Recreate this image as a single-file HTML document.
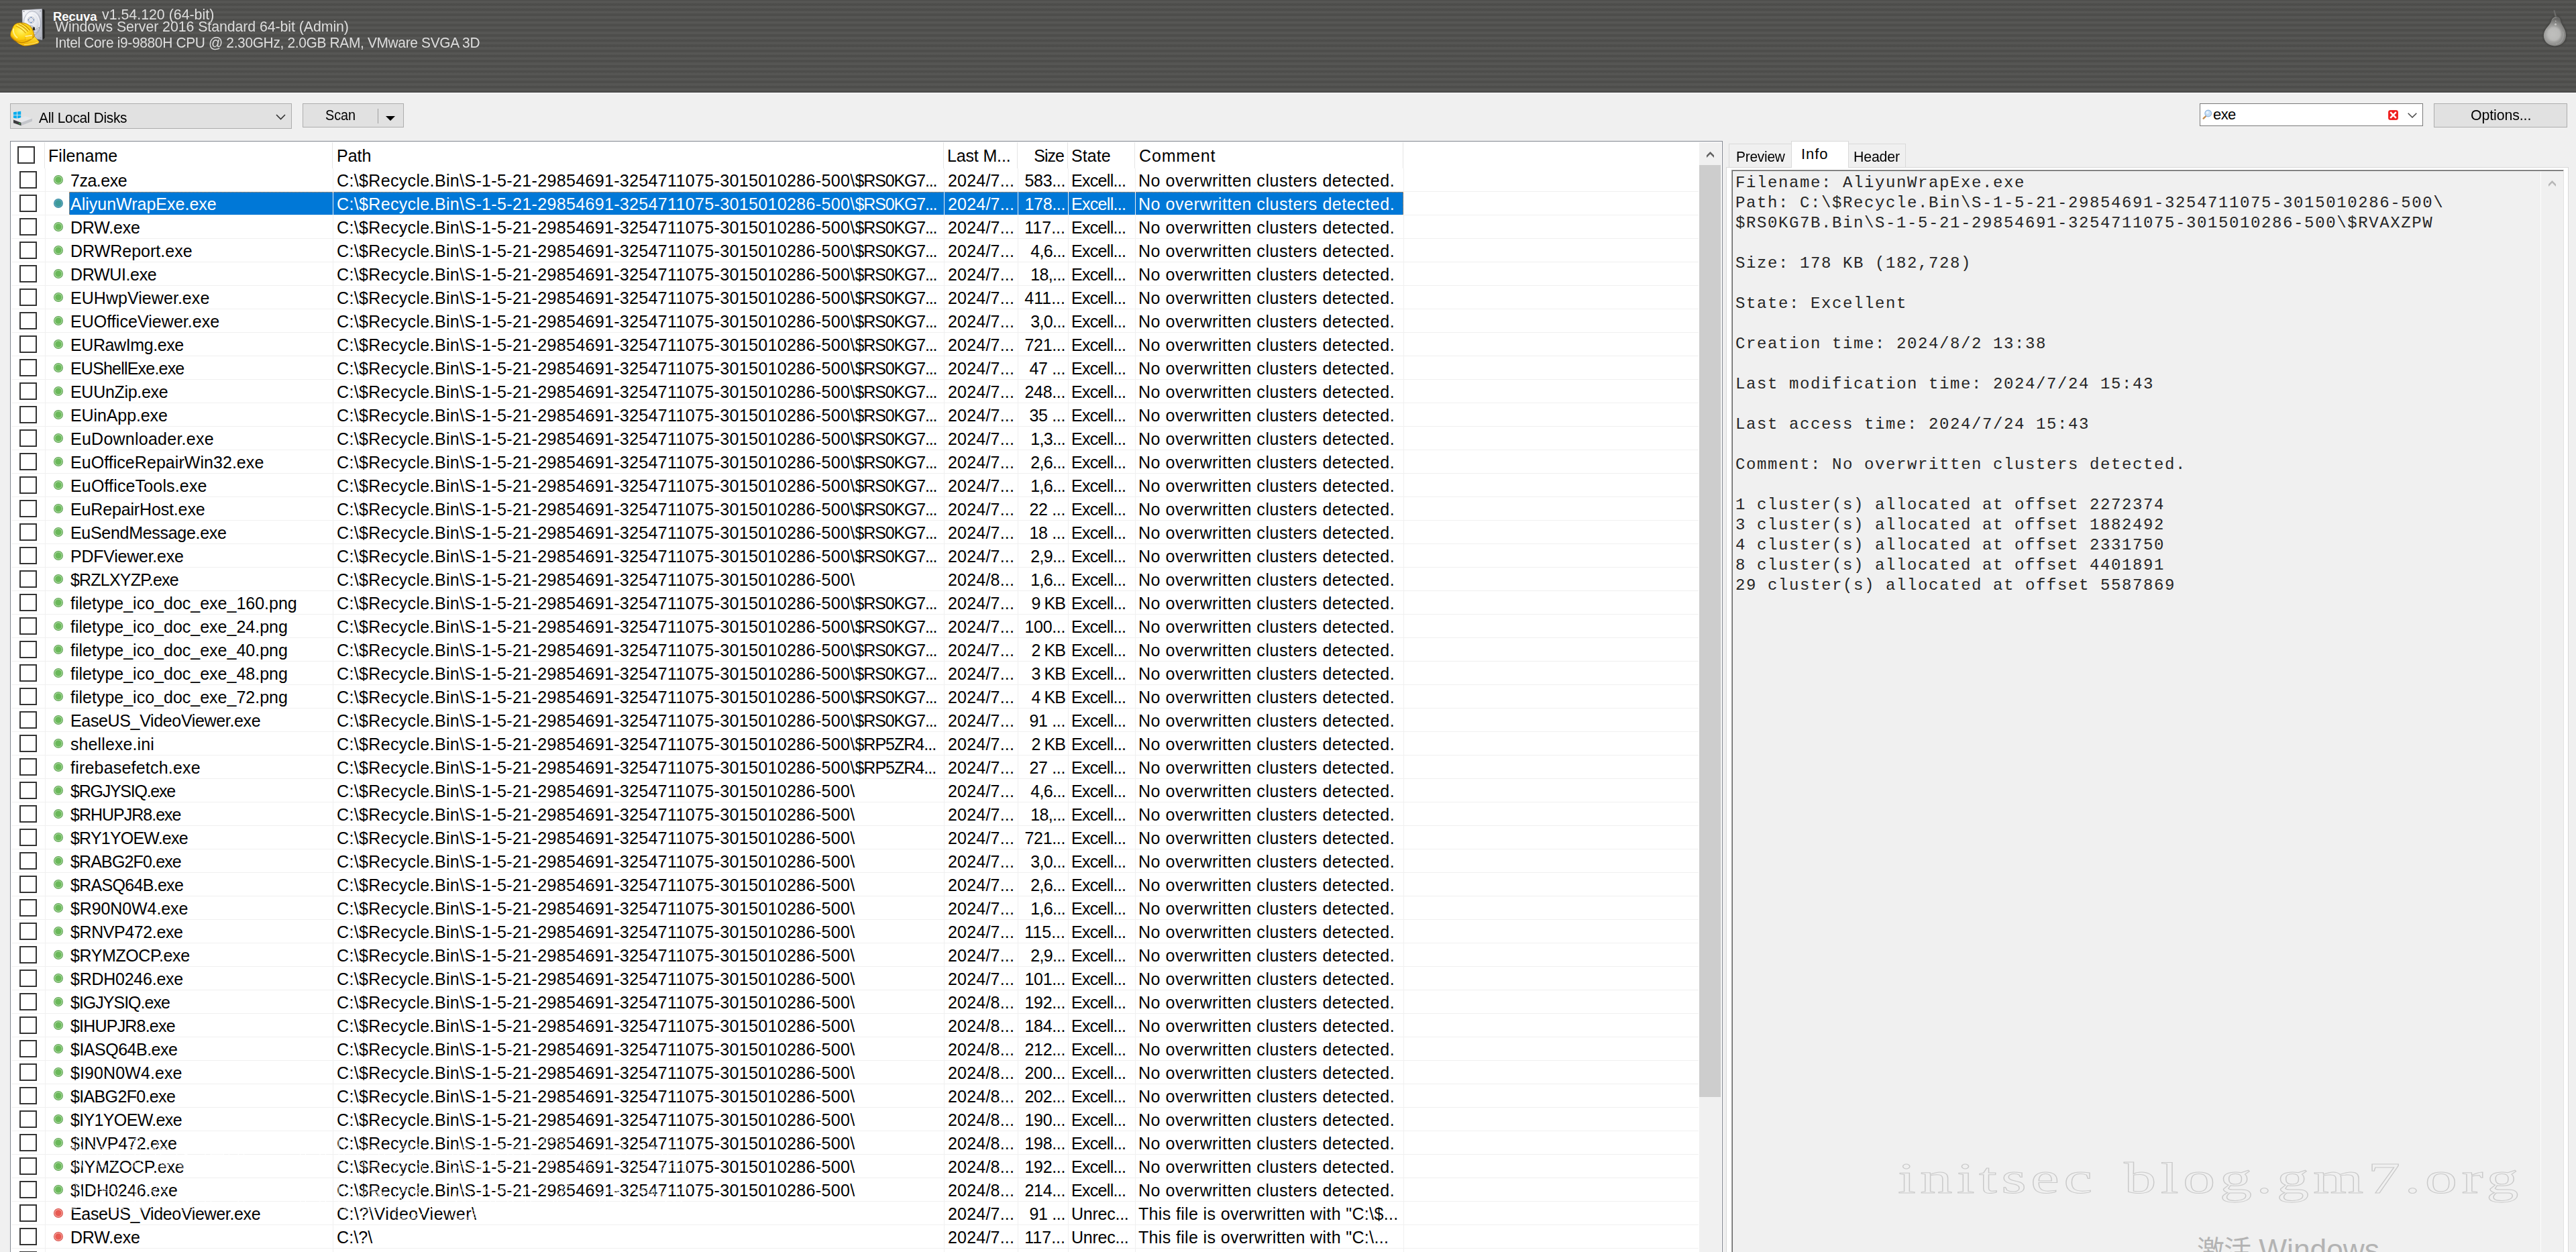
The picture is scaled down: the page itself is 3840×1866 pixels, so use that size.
<!DOCTYPE html>
<html lang="en"><head><meta charset="utf-8"><title>Recuva</title>
<style>
html,body{margin:0;padding:0}
body{width:3840px;height:1866px;overflow:hidden;position:relative;background:#f0f0f0;font-family:"Liberation Sans",sans-serif;color:#000}
div,span,i,b,pre{position:absolute;box-sizing:border-box;margin:0;padding:0;white-space:pre;font-style:normal}
svg{position:absolute;overflow:visible}
#hdr{left:0;top:0;width:3840px;height:137px;background:repeating-linear-gradient(to bottom,#4d4d4b 0px,#4d4d4b .6px,#565654 1.4px,#565654 4.4px,#4d4d4b 5.2px,#4d4d4b 7.68px)}
#hdrb{left:0;top:137px;width:3840px;height:1px;background:#464646}
#hdrw{left:0;top:138px;width:3840px;height:1px;background:#fbfbfb}
.ht{color:#dedede;font-size:22px;line-height:22px;letter-spacing:-0.6px}
#t_rec{left:79px;top:15px;height:20px;width:80px}
#t_rec b{left:0;top:0;font-weight:bold;font-size:18.6px;line-height:19px;color:#fff;letter-spacing:-.1px}
#t_ver{left:152px;top:11px;letter-spacing:0px;transform-origin:0 0;transform:scaleX(.97)}
#t_os{left:82px;top:33px;width:700px;height:24px}
#t_os span{left:0;top:-4px;letter-spacing:-0.08px;transform-origin:0 0;transform:scaleX(.97)}
#t_cpu{left:82px;top:53px;letter-spacing:-0.35px;transform-origin:0 0;transform:scaleX(.95)}
.btn{background:#e1e1e1;border:1px solid #adadad}
.tt{font-size:22px;line-height:22px;letter-spacing:-0.6px}
#combo{left:15px;top:154px;width:420px;height:38px}
#scan{left:451px;top:154px;width:151px;height:36px}
#opts{left:3628px;top:154px;width:199px;height:36px}
#search{left:3279px;top:154px;width:333px;height:34px;background:#fff;border:1px solid #7a7a7a}
#list{left:15px;top:210px;width:2553px;height:1670px;background:#fff;border:1px solid #828790}
#listin{left:0;top:0;width:2551px;height:1655px;overflow:hidden}
.row{left:0;width:2548px;height:35px}
.row::after{content:"";position:absolute;left:17px;top:34px;width:2515px;height:1px;background:#f0f0f0}
.cb{left:29px;top:4px;width:26px;height:26px;border:2px solid #333;background:#fff}
.dot{left:80px;top:10px;width:14px;height:14px;border-radius:50%}
.dg{background:radial-gradient(circle at 50% 50%,#6ab85a 0,#6ab85a 4.2px,#b4e0a8 5.3px,#5aa04e 6.4px,#5aa04e 7px)}
.ds{background:radial-gradient(circle at 50% 50%,#3d9a98 0,#3d9a98 4.2px,#62a8c2 5.3px,#3b8fa2 6.4px,#3b8fa2 7px)}
.dr{background:radial-gradient(circle at 50% 50%,#e85a52 0,#e85a52 4.2px,#f6b0a8 5.3px,#d84a44 6.4px,#d84a44 7px)}
.c{top:6px;font-size:25px;line-height:25px;height:30px}
.fn{left:105px}
.pa{left:502px}
.da{left:1413px}
.sz{right:960px;text-align:right}
.st{left:1597px}
.co{left:1697px}
.sel .c{color:#fff}
.hl{left:103px;top:0;width:1989px;height:34px;background:#0078d7;border:1px dotted #e98b35;border-bottom:none}
.vl{top:40px;width:1px;height:1640px;background:#f0f0f0}
.hvl{top:1px;width:1px;height:39px;background:#e5e5e5}
.hc{top:9px;font-size:25px;line-height:25px}
#sb{left:2517px;top:1px;width:33px;height:1660px;background:#f0f0f0}
#sbt{left:0;top:34px;width:32px;height:1389px;background:#cdcdcd}
.tab{background:#f0f0f0;border:1px solid #d9d9d9;border-bottom:none}
#pane{left:2573px;top:249px;width:1256px;height:1640px;background:#fff;border:1px solid #d9d9d9}
#tbox{left:2581px;top:253px;width:1241px;height:1640px;background:#f0f0f0;border:1px solid #a0a0a0;border-right-color:#e3e3e3}
#tbox2{left:0;top:0;width:1239px;height:1640px;border:1px solid #696969;border-right:none}
#info{left:2587px;top:258px;font-family:"Liberation Mono",monospace;font-size:24px;line-height:30px;color:#262626;letter-spacing:1.6px}
#wm{left:2829px;top:1723px;font-family:"Liberation Serif",serif;font-size:66px;line-height:66px;letter-spacing:4.4px;color:transparent;-webkit-text-stroke:1px #c9c9c9;transform-origin:0 0;word-spacing:7px;transform:scaleX(1.46)}
.wm2{left:104px;font-family:"Liberation Serif",serif;font-size:66px;line-height:66px;letter-spacing:4.4px;word-spacing:7px;color:transparent;-webkit-text-stroke:.7px #fff;transform-origin:0 0;transform:scaleX(1.46)}
#act{left:3275px;top:1841px;font-family:"Liberation Sans","Noto Sans CJK SC",sans-serif;font-size:44.3px;line-height:44.3px;color:#b3b3b3;letter-spacing:0px}
em{font-style:normal;position:static}
#act em{font-size:41px;letter-spacing:-1px}

.l0{letter-spacing:-0.5px}
.l1{letter-spacing:0.35px}
.l2{letter-spacing:-1.15px}
.l3{letter-spacing:0.2px}
.l4{letter-spacing:-0.35px}
.l5{letter-spacing:-0.7px}
.l6{letter-spacing:0.55px}
.l7{letter-spacing:0px}
.l8{letter-spacing:-0.2px}
.l9{letter-spacing:-0.65px}
.l10{letter-spacing:0.05px}
.l11{letter-spacing:-0.4px}
.l12{letter-spacing:-0.8px}
.l13{letter-spacing:-0.3px}
.l14{letter-spacing:-0.1px}
.l15{letter-spacing:0.25px}
.l16{letter-spacing:0.15px}
.l17{letter-spacing:-0.15px}
.l18{letter-spacing:-0.25px}
.l19{letter-spacing:-0.95px}
.l20{letter-spacing:0.1px}
.l21{letter-spacing:-1px}
.l22{letter-spacing:-1.25px}
.l23{letter-spacing:-0.85px}
.l24{letter-spacing:0.85px}
</style></head>
<body>
<div id="hdr"></div><div id="hdrb"></div><div id="hdrw"></div>
<svg style="left:0;top:0" width="90" height="80" viewBox="0 0 90 80">
<defs>
<linearGradient id="gF" x1="0" y1="0" x2="1" y2="1"><stop offset="0" stop-color="#fbfbfd"/><stop offset=".5" stop-color="#d6d9e2"/><stop offset="1" stop-color="#a9adb9"/></linearGradient>
<linearGradient id="gS" x1="0" y1="0" x2="1" y2="0"><stop offset="0" stop-color="#5a5a5a"/><stop offset=".5" stop-color="#161616"/><stop offset="1" stop-color="#3c3c3c"/></linearGradient>
<radialGradient id="gP" cx=".35" cy=".3" r=".8"><stop offset="0" stop-color="#ffffff"/><stop offset=".6" stop-color="#dfe2ea"/><stop offset="1" stop-color="#aeb2c0"/></radialGradient>
<radialGradient id="gH" cx=".38" cy=".35" r=".75"><stop offset="0" stop-color="#fff36a"/><stop offset=".35" stop-color="#ffd91a"/><stop offset=".75" stop-color="#f2b400"/><stop offset="1" stop-color="#c98a00"/></radialGradient>
<linearGradient id="gB" x1="0" y1="0" x2="0" y2="1"><stop offset="0" stop-color="#ffe23a"/><stop offset="1" stop-color="#f0b000"/></linearGradient>
</defs>
<path d="M62.5 13.3 L67 15 L67 56.6 L63 59.6 Z" fill="url(#gS)"/>
<path d="M33 15 L62.5 13.3 L63 59.6 L33.8 54.5 Z" fill="url(#gF)" stroke="#8d909c" stroke-width=".6"/>
<ellipse cx="48" cy="34.8" rx="12.9" ry="18.3" fill="url(#gP)" stroke="#9a9eac" stroke-width=".7"/>
<ellipse cx="48" cy="34.8" rx="10.5" ry="15.4" fill="none" stroke="#f6f7fa" stroke-width="1.2"/>
<circle cx="46.3" cy="29.8" r="4.9" fill="#eceef4" stroke="#9ea2b0" stroke-width=".7"/>
<circle cx="46.3" cy="29.8" r="1.8" fill="#dfe2ea"/>
<g fill="#1d4d96"><circle cx="46.3" cy="26.3" r=".8"/><circle cx="49.8" cy="29.8" r=".8"/><circle cx="46.3" cy="33.4" r=".8"/><circle cx="42.8" cy="29.8" r=".8"/></g>
<g fill="#3a3a3a"><circle cx="43.8" cy="27.3" r=".5"/><circle cx="48.8" cy="27.3" r=".5"/><circle cx="48.8" cy="32.3" r=".5"/><circle cx="43.8" cy="32.3" r=".5"/></g>
<path d="M45 37.5 L49 39 L53 45 L55.5 42 L57 44 L55 48 L52 49 L48 44 Z" fill="#cfd2dc" stroke="#8a8e9a" stroke-width=".5"/>
<rect x="48.8" y="40.6" width="3.2" height="4.6" rx=".6" fill="#2b2b2b"/>
<circle cx="58" cy="41.5" r=".7" fill="#555"/>
<circle cx="35.6" cy="17" r=".9" fill="#8b8e98"/><circle cx="60.2" cy="16.3" r=".9" fill="#8b8e98"/><circle cx="60.6" cy="56.5" r=".8" fill="#8b8e98"/>
<path d="M15.8 53.8 C15.4 49.5 16.4 46.5 17.8 44.3 C18.8 41 20 38.5 22 36.5 C24.5 34.6 28 33.8 31.5 34 C35.5 34 39 34.8 41.5 36.5 C44.8 38.3 47 40.8 48.3 43.8 C50 47.5 51 51 51.3 54.4 L57.8 61.7 C58.2 63 57.6 64 56.6 64.5 C50 66.8 41 68.5 34.8 68.1 C30.5 66.5 27 64.5 24.2 61.7 C20.5 59.5 17.3 57 15.8 53.8 Z" fill="url(#gH)" stroke="#a86f00" stroke-width=".8"/>
<path d="M24.2 61.7 C28 63.6 32 64.3 36 63.3 C42 61.9 47.5 58.7 51.3 54.4 L57.8 61.7 C58.2 63 57.6 64 56.6 64.5 C50 66.8 41 68.5 34.8 68.1 C30.5 66.5 27 64.5 24.2 61.7 Z" fill="url(#gB)"/>
<path d="M17 55.5 C19.5 58.5 22 60.5 24.6 61.6 C28.3 63.4 32 64 36 63 C42 61.6 47.4 58.4 51 54.2" fill="none" stroke="#b87800" stroke-width="1.5" opacity=".75"/>
<path d="M16.6 52.5 C18.8 56.5 22.5 59.2 27 60.2 C34 61.4 43 58.5 50.2 51.5" fill="none" stroke="#e59f00" stroke-width="1.6" opacity=".6"/>
<path d="M37.4 53.6 L48 51.9 L48.6 57.7 L38 59.8 Z" fill="#ffd21a" stroke="#d79a00" stroke-width=".4"/><path d="M37.2 53.4 L48 51.7 L48.2 53.2 L37.5 55 Z" fill="#fff3b0"/>
<path d="M27.5 36.2 C33 38.5 38 42 41.8 47" fill="none" stroke="#c98c00" stroke-width="1.2"/>
<path d="M31.5 35 C36.5 37 41 40.5 44.6 45.2" fill="none" stroke="#c98c00" stroke-width="1.2"/>
<path d="M23.6 38.4 C29 40.8 34.5 44.5 38.4 49.3" fill="none" stroke="#d89c00" stroke-width="1.1"/>
<path d="M28.6 35.4 C34 37.6 39 41 42.9 46" fill="none" stroke="#fff08a" stroke-width=".9" opacity=".9"/>
<path d="M24.7 37.5 C30 39.8 35.5 43.5 39.4 48.2" fill="none" stroke="#fff08a" stroke-width=".9" opacity=".9"/>
<path d="M20 42.5 C19 47 21 53 26 56.5" fill="none" stroke="#fff9b8" stroke-width="2" opacity=".75"/>
<path d="M36 66.6 C43 66.4 50 65 56.4 63" fill="none" stroke="#fff2a0" stroke-width=".9" opacity=".8"/>
</svg>
<svg style="left:3780px;top:0" width="60" height="80" viewBox="3780 0 60 80">
<defs><radialGradient id="gPr" cx="3805.5" cy="51" r="23" gradientUnits="userSpaceOnUse"><stop offset="0" stop-color="#c4c4c2"/><stop offset=".4" stop-color="#adadab"/><stop offset=".8" stop-color="#838381"/><stop offset="1" stop-color="#676765"/></radialGradient>
<filter id="fb" x="-20%" y="-20%" width="140%" height="140%"><feGaussianBlur stdDeviation="1.1"/></filter></defs>
<path d="M3810.5 23.8 C3814.5 23.8 3817.3 26.5 3817.9 30.3 C3818.7 35 3821.4 38.3 3823.4 42.3 C3825.5 46.5 3826 49.5 3826 53 C3826 62.8 3818 69.4 3808.4 69.4 C3798.8 69.4 3790.8 62.8 3790.8 53 C3790.8 47.8 3793.2 43.6 3796.7 39.6 C3799.7 36 3801.6 33.8 3802.4 30.6 C3803.3 26.6 3806.5 23.8 3810.5 23.8 Z" fill="#3c3c3b" filter="url(#fb)" opacity=".95"/>
<path d="M3806.4 15.6 L3808.4 15 L3811 24.6 L3808.8 25.2 Z" fill="#6c6c6a"/>
<path d="M3810.5 24.6 C3814 24.6 3816.5 27 3817 30.5 C3817.8 35 3820.5 38.5 3822.5 42.5 C3824.5 46.5 3825 49.5 3825 53 C3825 62.3 3817.5 68.4 3808.4 68.4 C3799.3 68.4 3791.8 62.3 3791.8 53 C3791.8 48 3794 44 3797.5 40 C3800.5 36.5 3802.5 34 3803.3 30.8 C3804.2 27 3807 24.6 3810.5 24.6 Z" fill="url(#gPr)"/>
<ellipse cx="3807.5" cy="50.5" rx="10" ry="10.5" fill="#bebebc" filter="url(#fb)" opacity=".75"/>
<path d="M3820.5 47 C3822 52 3821.3 57 3818.6 61 C3816.5 63.8 3813.5 65.3 3810 65.6" fill="none" stroke="#a8a8a6" stroke-width="1.1" opacity=".8"/>
<path d="M3804.6 29.5 C3806 27.2 3808.5 26 3811 26.3" fill="none" stroke="#a0a09e" stroke-width=".9" opacity=".8"/>
<circle cx="3809.5" cy="36.3" r="1.5" fill="#c6c6c4"/><circle cx="3809.7" cy="31.5" r=".8" fill="#bcbcba"/>
</svg>
<div id="t_rec"><b>Recuva</b></div>
<span id="t_ver" class="ht">v1.54.120 (64-bit)</span>
<div id="t_os"><span class="ht">Windows Server 2016 Standard 64-bit (Admin)</span></div>
<span id="t_cpu" class="ht">Intel Core i9-9880H CPU @ 2.30GHz, 2.0GB RAM, VMware SVGA 3D</span>

<div id="combo" class="btn"><svg style="left:0;top:0" width="40" height="36" viewBox="16 155 40 36">
<g fill="#00adef"><path d="M20 167.3 L25 166.6 V171 H20 Z"/><path d="M26 166.5 L31.2 165.8 V171 H26 Z"/><path d="M20 172 H25 V176.4 L20 175.7 Z"/><path d="M26 172 H31.2 V177.2 L26 176.5 Z"/></g>
<path d="M20 178.6 L37.5 173.2 L48 176.4 L31.5 182.8 Z" fill="#e6e7ea"/>
<path d="M31.5 182.8 L48 176.4 V180.8 L31.5 187.2 Z" fill="#c3c5ca"/>
<path d="M20 178.6 L31.5 182.8 V187.2 L20 183.2 Z" fill="#3c3c3e"/>
<rect x="28.3" y="183.6" width="2" height="1.3" fill="#35d04a"/>
</svg><span class="tt" style="left:42px;top:10px;letter-spacing:-.33px;transform-origin:0 0;transform:scaleX(.95)">All Local Disks</span>
<svg style="left:395px;top:15px" width="15" height="9" viewBox="0 0 15 9"><path d="M1 1 L7.5 7.5 L14 1" fill="none" stroke="#333" stroke-width="1.6"/></svg></div>
<div id="scan" class="btn"><span class="tt" style="left:33px;top:6px;letter-spacing:0;transform-origin:0 0;transform:scaleX(.9)">Scan</span><i style="left:111px;top:7px;width:1px;height:22px;background:#a0a0a0"></i>
<svg style="left:123px;top:18px" width="14" height="7" viewBox="0 0 14 7"><path d="M0 0 H14 L7 7 Z" fill="#000"/></svg></div>
<div id="search"><svg style="left:0;top:0" width="24" height="32" viewBox="0 0 24 32">
<path d="M4.6 21.6 L8.4 18" stroke="#c58a4a" stroke-width="2.4" stroke-linecap="round"/>
<circle cx="11.7" cy="14" r="4.9" fill="#c4dcf4" stroke="#8fb4dc" stroke-width="1.1"/>
<circle cx="10.6" cy="12.8" r="2" fill="#e8f3fd"/>
</svg><span class="tt" style="left:19px;top:5px">exe</span>
<svg style="left:280px;top:9px" width="15" height="15" viewBox="0 0 15 15"><rect x=".5" y=".5" width="14" height="14" rx="2.5" fill="#ee1c1c" stroke="#f43030"/><path d="M3.2 3.2 L11.8 11.8 M11.8 3.2 L3.2 11.8" stroke="#fff" stroke-width="2.6"/></svg>
<svg style="left:309px;top:13px" width="14" height="8" viewBox="0 0 14 8"><path d="M.7 .7 L7 7 L13.3 .7" fill="none" stroke="#444" stroke-width="1.5"/></svg></div>
<div id="opts" class="btn"><span class="tt" style="left:54px;top:6px;letter-spacing:-0.11px;transform-origin:0 0;transform:scaleX(.97)">Options...</span></div>

<div id="list"><div id="listin">
<i class="cb" style="left:10px;top:7px"></i>
<i class="hvl" style="left:50px"></i><i class="hvl" style="left:479px"></i><i class="hvl" style="left:1390px"></i><i class="hvl" style="left:1500px"></i><i class="hvl" style="left:1575px"></i><i class="hvl" style="left:1675px"></i><i class="hvl" style="left:2075px"></i>
<span class="hc l10" style="left:56px">Filename</span><span class="hc l7" style="left:486px">Path</span><span class="hc l17" style="left:1396px">Last M...</span><span class="hc l21" style="right:981px">Size</span><span class="hc l10" style="left:1581px">State</span><span class="hc l24" style="left:1682px">Comment</span>
<div id="rows" style="left:-16px;top:-211px;width:2600px;height:1900px">
<div class="row" style="top:251px"><i class="cb"></i><i class="dot dg"></i><span class="c fn l0">7za.exe</span><span class="c pa l1">C:\$Recycle.Bin\S-1-5-21-29854691-3254711075-3015010286-500\<em class="l2">$RS0KG7...</em></span><span class="c da l3">2024/7...</span><span class="c sz l4">583...</span><span class="c st l5">Excell...</span><span class="c co l6">No overwritten clusters detected.</span></div>
<div class="row sel" style="top:286px"><div class="hl"></div><i class="cb"></i><i class="dot ds"></i><span class="c fn l7">AliyunWrapExe.exe</span><span class="c pa l1">C:\$Recycle.Bin\S-1-5-21-29854691-3254711075-3015010286-500\<em class="l2">$RS0KG7...</em></span><span class="c da l3">2024/7...</span><span class="c sz l4">178...</span><span class="c st l5">Excell...</span><span class="c co l6">No overwritten clusters detected.</span></div>
<div class="row" style="top:321px"><i class="cb"></i><i class="dot dg"></i><span class="c fn l8">DRW.exe</span><span class="c pa l1">C:\$Recycle.Bin\S-1-5-21-29854691-3254711075-3015010286-500\<em class="l2">$RS0KG7...</em></span><span class="c da l3">2024/7...</span><span class="c sz l7">117...</span><span class="c st l5">Excell...</span><span class="c co l6">No overwritten clusters detected.</span></div>
<div class="row" style="top:356px"><i class="cb"></i><i class="dot dg"></i><span class="c fn l7">DRWReport.exe</span><span class="c pa l1">C:\$Recycle.Bin\S-1-5-21-29854691-3254711075-3015010286-500\<em class="l2">$RS0KG7...</em></span><span class="c da l3">2024/7...</span><span class="c sz l9">4,6...</span><span class="c st l5">Excell...</span><span class="c co l6">No overwritten clusters detected.</span></div>
<div class="row" style="top:391px"><i class="cb"></i><i class="dot dg"></i><span class="c fn l4">DRWUI.exe</span><span class="c pa l1">C:\$Recycle.Bin\S-1-5-21-29854691-3254711075-3015010286-500\<em class="l2">$RS0KG7...</em></span><span class="c da l3">2024/7...</span><span class="c sz l9">18,...</span><span class="c st l5">Excell...</span><span class="c co l6">No overwritten clusters detected.</span></div>
<div class="row" style="top:426px"><i class="cb"></i><i class="dot dg"></i><span class="c fn l10">EUHwpViewer.exe</span><span class="c pa l1">C:\$Recycle.Bin\S-1-5-21-29854691-3254711075-3015010286-500\<em class="l2">$RS0KG7...</em></span><span class="c da l3">2024/7...</span><span class="c sz l7">411...</span><span class="c st l5">Excell...</span><span class="c co l6">No overwritten clusters detected.</span></div>
<div class="row" style="top:461px"><i class="cb"></i><i class="dot dg"></i><span class="c fn l10">EUOfficeViewer.exe</span><span class="c pa l1">C:\$Recycle.Bin\S-1-5-21-29854691-3254711075-3015010286-500\<em class="l2">$RS0KG7...</em></span><span class="c da l3">2024/7...</span><span class="c sz l9">3,0...</span><span class="c st l5">Excell...</span><span class="c co l6">No overwritten clusters detected.</span></div>
<div class="row" style="top:496px"><i class="cb"></i><i class="dot dg"></i><span class="c fn l11">EURawImg.exe</span><span class="c pa l1">C:\$Recycle.Bin\S-1-5-21-29854691-3254711075-3015010286-500\<em class="l2">$RS0KG7...</em></span><span class="c da l3">2024/7...</span><span class="c sz l4">721...</span><span class="c st l5">Excell...</span><span class="c co l6">No overwritten clusters detected.</span></div>
<div class="row" style="top:531px"><i class="cb"></i><i class="dot dg"></i><span class="c fn l12">EUShellExe.exe</span><span class="c pa l1">C:\$Recycle.Bin\S-1-5-21-29854691-3254711075-3015010286-500\<em class="l2">$RS0KG7...</em></span><span class="c da l3">2024/7...</span><span class="c sz l4">47 ...</span><span class="c st l5">Excell...</span><span class="c co l6">No overwritten clusters detected.</span></div>
<div class="row" style="top:566px"><i class="cb"></i><i class="dot dg"></i><span class="c fn l13">EUUnZip.exe</span><span class="c pa l1">C:\$Recycle.Bin\S-1-5-21-29854691-3254711075-3015010286-500\<em class="l2">$RS0KG7...</em></span><span class="c da l3">2024/7...</span><span class="c sz l4">248...</span><span class="c st l5">Excell...</span><span class="c co l6">No overwritten clusters detected.</span></div>
<div class="row" style="top:601px"><i class="cb"></i><i class="dot dg"></i><span class="c fn l14">EUinApp.exe</span><span class="c pa l1">C:\$Recycle.Bin\S-1-5-21-29854691-3254711075-3015010286-500\<em class="l2">$RS0KG7...</em></span><span class="c da l3">2024/7...</span><span class="c sz l4">35 ...</span><span class="c st l5">Excell...</span><span class="c co l6">No overwritten clusters detected.</span></div>
<div class="row" style="top:636px"><i class="cb"></i><i class="dot dg"></i><span class="c fn l15">EuDownloader.exe</span><span class="c pa l1">C:\$Recycle.Bin\S-1-5-21-29854691-3254711075-3015010286-500\<em class="l2">$RS0KG7...</em></span><span class="c da l3">2024/7...</span><span class="c sz l9">1,3...</span><span class="c st l5">Excell...</span><span class="c co l6">No overwritten clusters detected.</span></div>
<div class="row" style="top:671px"><i class="cb"></i><i class="dot dg"></i><span class="c fn l10">EuOfficeRepairWin32.exe</span><span class="c pa l1">C:\$Recycle.Bin\S-1-5-21-29854691-3254711075-3015010286-500\<em class="l2">$RS0KG7...</em></span><span class="c da l3">2024/7...</span><span class="c sz l9">2,6...</span><span class="c st l5">Excell...</span><span class="c co l6">No overwritten clusters detected.</span></div>
<div class="row" style="top:706px"><i class="cb"></i><i class="dot dg"></i><span class="c fn l16">EuOfficeTools.exe</span><span class="c pa l1">C:\$Recycle.Bin\S-1-5-21-29854691-3254711075-3015010286-500\<em class="l2">$RS0KG7...</em></span><span class="c da l3">2024/7...</span><span class="c sz l9">1,6...</span><span class="c st l5">Excell...</span><span class="c co l6">No overwritten clusters detected.</span></div>
<div class="row" style="top:741px"><i class="cb"></i><i class="dot dg"></i><span class="c fn l17">EuRepairHost.exe</span><span class="c pa l1">C:\$Recycle.Bin\S-1-5-21-29854691-3254711075-3015010286-500\<em class="l2">$RS0KG7...</em></span><span class="c da l3">2024/7...</span><span class="c sz l4">22 ...</span><span class="c st l5">Excell...</span><span class="c co l6">No overwritten clusters detected.</span></div>
<div class="row" style="top:776px"><i class="cb"></i><i class="dot dg"></i><span class="c fn l13">EuSendMessage.exe</span><span class="c pa l1">C:\$Recycle.Bin\S-1-5-21-29854691-3254711075-3015010286-500\<em class="l2">$RS0KG7...</em></span><span class="c da l3">2024/7...</span><span class="c sz l4">18 ...</span><span class="c st l5">Excell...</span><span class="c co l6">No overwritten clusters detected.</span></div>
<div class="row" style="top:811px"><i class="cb"></i><i class="dot dg"></i><span class="c fn l18">PDFViewer.exe</span><span class="c pa l1">C:\$Recycle.Bin\S-1-5-21-29854691-3254711075-3015010286-500\<em class="l2">$RS0KG7...</em></span><span class="c da l3">2024/7...</span><span class="c sz l9">2,9...</span><span class="c st l5">Excell...</span><span class="c co l6">No overwritten clusters detected.</span></div>
<div class="row" style="top:846px"><i class="cb"></i><i class="dot dg"></i><span class="c fn l12">$RZLXYZP.exe</span><span class="c pa l1">C:\$Recycle.Bin\S-1-5-21-29854691-3254711075-3015010286-500\</span><span class="c da l3">2024/8...</span><span class="c sz l9">1,6...</span><span class="c st l5">Excell...</span><span class="c co l6">No overwritten clusters detected.</span></div>
<div class="row" style="top:881px"><i class="cb"></i><i class="dot dg"></i><span class="c fn l7">filetype_ico_doc_exe_160.png</span><span class="c pa l1">C:\$Recycle.Bin\S-1-5-21-29854691-3254711075-3015010286-500\<em class="l2">$RS0KG7...</em></span><span class="c da l3">2024/7...</span><span class="c sz l19">9 KB</span><span class="c st l5">Excell...</span><span class="c co l6">No overwritten clusters detected.</span></div>
<div class="row" style="top:916px"><i class="cb"></i><i class="dot dg"></i><span class="c fn l7">filetype_ico_doc_exe_24.png</span><span class="c pa l1">C:\$Recycle.Bin\S-1-5-21-29854691-3254711075-3015010286-500\<em class="l2">$RS0KG7...</em></span><span class="c da l3">2024/7...</span><span class="c sz l4">100...</span><span class="c st l5">Excell...</span><span class="c co l6">No overwritten clusters detected.</span></div>
<div class="row" style="top:951px"><i class="cb"></i><i class="dot dg"></i><span class="c fn l7">filetype_ico_doc_exe_40.png</span><span class="c pa l1">C:\$Recycle.Bin\S-1-5-21-29854691-3254711075-3015010286-500\<em class="l2">$RS0KG7...</em></span><span class="c da l3">2024/7...</span><span class="c sz l19">2 KB</span><span class="c st l5">Excell...</span><span class="c co l6">No overwritten clusters detected.</span></div>
<div class="row" style="top:986px"><i class="cb"></i><i class="dot dg"></i><span class="c fn l7">filetype_ico_doc_exe_48.png</span><span class="c pa l1">C:\$Recycle.Bin\S-1-5-21-29854691-3254711075-3015010286-500\<em class="l2">$RS0KG7...</em></span><span class="c da l3">2024/7...</span><span class="c sz l19">3 KB</span><span class="c st l5">Excell...</span><span class="c co l6">No overwritten clusters detected.</span></div>
<div class="row" style="top:1021px"><i class="cb"></i><i class="dot dg"></i><span class="c fn l7">filetype_ico_doc_exe_72.png</span><span class="c pa l1">C:\$Recycle.Bin\S-1-5-21-29854691-3254711075-3015010286-500\<em class="l2">$RS0KG7...</em></span><span class="c da l3">2024/7...</span><span class="c sz l19">4 KB</span><span class="c st l5">Excell...</span><span class="c co l6">No overwritten clusters detected.</span></div>
<div class="row" style="top:1056px"><i class="cb"></i><i class="dot dg"></i><span class="c fn l4">EaseUS_VideoViewer.exe</span><span class="c pa l1">C:\$Recycle.Bin\S-1-5-21-29854691-3254711075-3015010286-500\<em class="l2">$RS0KG7...</em></span><span class="c da l3">2024/7...</span><span class="c sz l4">91 ...</span><span class="c st l5">Excell...</span><span class="c co l6">No overwritten clusters detected.</span></div>
<div class="row" style="top:1091px"><i class="cb"></i><i class="dot dg"></i><span class="c fn l20">shellexe.ini</span><span class="c pa l1">C:\$Recycle.Bin\S-1-5-21-29854691-3254711075-3015010286-500\<em class="l21">$RP5ZR4...</em></span><span class="c da l3">2024/7...</span><span class="c sz l19">2 KB</span><span class="c st l5">Excell...</span><span class="c co l6">No overwritten clusters detected.</span></div>
<div class="row" style="top:1126px"><i class="cb"></i><i class="dot dg"></i><span class="c fn l3">firebasefetch.exe</span><span class="c pa l1">C:\$Recycle.Bin\S-1-5-21-29854691-3254711075-3015010286-500\<em class="l21">$RP5ZR4...</em></span><span class="c da l3">2024/7...</span><span class="c sz l4">27 ...</span><span class="c st l5">Excell...</span><span class="c co l6">No overwritten clusters detected.</span></div>
<div class="row" style="top:1161px"><i class="cb"></i><i class="dot dg"></i><span class="c fn l22">$RGJYSIQ.exe</span><span class="c pa l1">C:\$Recycle.Bin\S-1-5-21-29854691-3254711075-3015010286-500\</span><span class="c da l3">2024/7...</span><span class="c sz l9">4,6...</span><span class="c st l5">Excell...</span><span class="c co l6">No overwritten clusters detected.</span></div>
<div class="row" style="top:1196px"><i class="cb"></i><i class="dot dg"></i><span class="c fn l21">$RHUPJR8.exe</span><span class="c pa l1">C:\$Recycle.Bin\S-1-5-21-29854691-3254711075-3015010286-500\</span><span class="c da l3">2024/7...</span><span class="c sz l9">18,...</span><span class="c st l5">Excell...</span><span class="c co l6">No overwritten clusters detected.</span></div>
<div class="row" style="top:1231px"><i class="cb"></i><i class="dot dg"></i><span class="c fn l12">$RY1YOEW.exe</span><span class="c pa l1">C:\$Recycle.Bin\S-1-5-21-29854691-3254711075-3015010286-500\</span><span class="c da l3">2024/7...</span><span class="c sz l4">721...</span><span class="c st l5">Excell...</span><span class="c co l6">No overwritten clusters detected.</span></div>
<div class="row" style="top:1266px"><i class="cb"></i><i class="dot dg"></i><span class="c fn l23">$RABG2F0.exe</span><span class="c pa l1">C:\$Recycle.Bin\S-1-5-21-29854691-3254711075-3015010286-500\</span><span class="c da l3">2024/7...</span><span class="c sz l9">3,0...</span><span class="c st l5">Excell...</span><span class="c co l6">No overwritten clusters detected.</span></div>
<div class="row" style="top:1301px"><i class="cb"></i><i class="dot dg"></i><span class="c fn l5">$RASQ64B.exe</span><span class="c pa l1">C:\$Recycle.Bin\S-1-5-21-29854691-3254711075-3015010286-500\</span><span class="c da l3">2024/7...</span><span class="c sz l9">2,6...</span><span class="c st l5">Excell...</span><span class="c co l6">No overwritten clusters detected.</span></div>
<div class="row" style="top:1336px"><i class="cb"></i><i class="dot dg"></i><span class="c fn l14">$R90N0W4.exe</span><span class="c pa l1">C:\$Recycle.Bin\S-1-5-21-29854691-3254711075-3015010286-500\</span><span class="c da l3">2024/7...</span><span class="c sz l9">1,6...</span><span class="c st l5">Excell...</span><span class="c co l6">No overwritten clusters detected.</span></div>
<div class="row" style="top:1371px"><i class="cb"></i><i class="dot dg"></i><span class="c fn l11">$RNVP472.exe</span><span class="c pa l1">C:\$Recycle.Bin\S-1-5-21-29854691-3254711075-3015010286-500\</span><span class="c da l3">2024/7...</span><span class="c sz l7">115...</span><span class="c st l5">Excell...</span><span class="c co l6">No overwritten clusters detected.</span></div>
<div class="row" style="top:1406px"><i class="cb"></i><i class="dot dg"></i><span class="c fn l11">$RYMZOCP.exe</span><span class="c pa l1">C:\$Recycle.Bin\S-1-5-21-29854691-3254711075-3015010286-500\</span><span class="c da l3">2024/7...</span><span class="c sz l9">2,9...</span><span class="c st l5">Excell...</span><span class="c co l6">No overwritten clusters detected.</span></div>
<div class="row" style="top:1441px"><i class="cb"></i><i class="dot dg"></i><span class="c fn l18">$RDH0246.exe</span><span class="c pa l1">C:\$Recycle.Bin\S-1-5-21-29854691-3254711075-3015010286-500\</span><span class="c da l3">2024/7...</span><span class="c sz l4">101...</span><span class="c st l5">Excell...</span><span class="c co l6">No overwritten clusters detected.</span></div>
<div class="row" style="top:1476px"><i class="cb"></i><i class="dot dg"></i><span class="c fn l21">$IGJYSIQ.exe</span><span class="c pa l1">C:\$Recycle.Bin\S-1-5-21-29854691-3254711075-3015010286-500\</span><span class="c da l3">2024/8...</span><span class="c sz l4">192...</span><span class="c st l5">Excell...</span><span class="c co l6">No overwritten clusters detected.</span></div>
<div class="row" style="top:1511px"><i class="cb"></i><i class="dot dg"></i><span class="c fn l12">$IHUPJR8.exe</span><span class="c pa l1">C:\$Recycle.Bin\S-1-5-21-29854691-3254711075-3015010286-500\</span><span class="c da l3">2024/8...</span><span class="c sz l4">184...</span><span class="c st l5">Excell...</span><span class="c co l6">No overwritten clusters detected.</span></div>
<div class="row" style="top:1546px"><i class="cb"></i><i class="dot dg"></i><span class="c fn l0">$IASQ64B.exe</span><span class="c pa l1">C:\$Recycle.Bin\S-1-5-21-29854691-3254711075-3015010286-500\</span><span class="c da l3">2024/8...</span><span class="c sz l4">212...</span><span class="c st l5">Excell...</span><span class="c co l6">No overwritten clusters detected.</span></div>
<div class="row" style="top:1581px"><i class="cb"></i><i class="dot dg"></i><span class="c fn l20">$I90N0W4.exe</span><span class="c pa l1">C:\$Recycle.Bin\S-1-5-21-29854691-3254711075-3015010286-500\</span><span class="c da l3">2024/8...</span><span class="c sz l4">200...</span><span class="c st l5">Excell...</span><span class="c co l6">No overwritten clusters detected.</span></div>
<div class="row" style="top:1616px"><i class="cb"></i><i class="dot dg"></i><span class="c fn l9">$IABG2F0.exe</span><span class="c pa l1">C:\$Recycle.Bin\S-1-5-21-29854691-3254711075-3015010286-500\</span><span class="c da l3">2024/8...</span><span class="c sz l4">202...</span><span class="c st l5">Excell...</span><span class="c co l6">No overwritten clusters detected.</span></div>
<div class="row" style="top:1651px"><i class="cb"></i><i class="dot dg"></i><span class="c fn l9">$IY1YOEW.exe</span><span class="c pa l1">C:\$Recycle.Bin\S-1-5-21-29854691-3254711075-3015010286-500\</span><span class="c da l3">2024/8...</span><span class="c sz l4">190...</span><span class="c st l5">Excell...</span><span class="c co l6">No overwritten clusters detected.</span></div>
<div class="row" style="top:1686px"><i class="cb"></i><i class="dot dg"></i><span class="c fn l8">$INVP472.exe</span><span class="c pa l1">C:\$Recycle.Bin\S-1-5-21-29854691-3254711075-3015010286-500\</span><span class="c da l3">2024/8...</span><span class="c sz l4">198...</span><span class="c st l5">Excell...</span><span class="c co l6">No overwritten clusters detected.</span></div>
<div class="row" style="top:1721px"><i class="cb"></i><i class="dot dg"></i><span class="c fn l8">$IYMZOCP.exe</span><span class="c pa l1">C:\$Recycle.Bin\S-1-5-21-29854691-3254711075-3015010286-500\</span><span class="c da l3">2024/8...</span><span class="c sz l4">192...</span><span class="c st l5">Excell...</span><span class="c co l6">No overwritten clusters detected.</span></div>
<div class="row" style="top:1756px"><i class="cb"></i><i class="dot dg"></i><span class="c fn l7">$IDH0246.exe</span><span class="c pa l1">C:\$Recycle.Bin\S-1-5-21-29854691-3254711075-3015010286-500\</span><span class="c da l3">2024/8...</span><span class="c sz l4">214...</span><span class="c st l5">Excell...</span><span class="c co l6">No overwritten clusters detected.</span></div>
<div class="row" style="top:1791px"><i class="cb"></i><i class="dot dr"></i><span class="c fn l4">EaseUS_VideoViewer.exe</span><span class="c pa l6">C:\?\VideoViewer\</span><span class="c da l3">2024/7...</span><span class="c sz l4">91 ...</span><span class="c st l18">Unrec...</span><span class="c co l1">This file is overwritten with &quot;C:\$...</span></div>
<div class="row" style="top:1826px"><i class="cb"></i><i class="dot dr"></i><span class="c fn l8">DRW.exe</span><span class="c pa l20">C:\?\</span><span class="c da l3">2024/7...</span><span class="c sz l7">117...</span><span class="c st l18">Unrec...</span><span class="c co l1">This file is overwritten with &quot;C:\...</span></div>
<div class="row" style="top:1861px"><i class="cb"></i></div>
</div>
<i class="vl" style="left:51px"></i><i class="vl" style="left:480px"></i><i class="vl" style="left:1391px"></i><i class="vl" style="left:1501px"></i><i class="vl" style="left:1576px"></i><i class="vl" style="left:1676px"></i><i class="vl" style="left:2076px"></i>
<div id="sb"><svg style="left:0;top:0" width="33" height="34" viewBox="0 0 33 34"><path d="M11 19.5 L16.5 14 L22 19.5 V23 L16.5 17.6 L11 23 Z" fill="#606060"/></svg><div id="sbt"></div></div>
</div></div>

<div class="tab" style="left:2577px;top:214px;width:94px;height:36px"><span class="tt" style="left:10px;top:8px;letter-spacing:-0.25px;transform-origin:0 0;transform:scaleX(.95)">Preview</span></div>
<div class="tab" style="left:2755px;top:214px;width:86px;height:36px"><span class="tt" style="left:6.5px;top:8px;letter-spacing:-0.19px;transform-origin:0 0;transform:scaleX(.97)">Header</span></div>
<div id="pane"></div>
<div class="tab" style="left:2670px;top:210px;width:86px;height:40px;background:#fff"><span class="tt" style="left:14px;top:8px;letter-spacing:0.97px">Info</span></div>
<div id="tbox"><div id="tbox2"></div>
<i style="left:1205px;top:2px;width:1px;height:1640px;background:#fdfdfd"></i>
<svg style="left:1200px;top:0" width="40" height="34" viewBox="1200 0 40 34"><path d="M1217 20.5 L1222.5 15 L1228 20.5 V24 L1222.5 18.6 L1217 24 Z" fill="#b6b6b6"/></svg>
</div>
<pre id="info">Filename: AliyunWrapExe.exe
Path: C:\$Recycle.Bin\S-1-5-21-29854691-3254711075-3015010286-500\
$RS0KG7B.Bin\S-1-5-21-29854691-3254711075-3015010286-500\$RVAXZPW

Size: 178 KB (182,728)

State: Excellent

Creation time: 2024/8/2 13:38

Last modification time: 2024/7/24 15:43

Last access time: 2024/7/24 15:43

Comment: No overwritten clusters detected.

1 cluster(s) allocated at offset 2272374
3 cluster(s) allocated at offset 1882492
4 cluster(s) allocated at offset 2331750
8 cluster(s) allocated at offset 4401891
29 cluster(s) allocated at offset 5587869</pre>
<span id="wm">initsec blog.gm7.org</span>
<span class="wm2" style="top:1684px">initsec blog.gm7.org</span>
<span class="wm2" style="top:1748px">initsec blog.gm7.org</span>
<span id="act"><em>激活</em> Windows</span>

</body></html>
